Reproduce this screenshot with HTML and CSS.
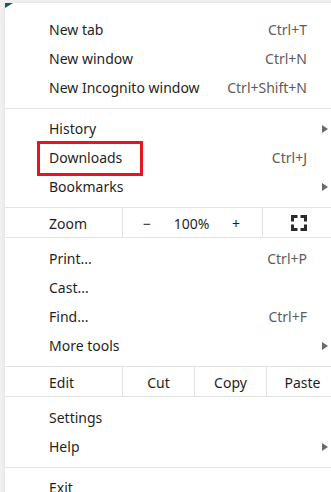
FILE: index.html
```html
<!DOCTYPE html>
<html lang="en">

<head>
  <meta charset="UTF-8">
  <meta name="viewport" content="width=device-width, initial-scale=1.0">
  <title>Browser menu</title>
  <link rel="stylesheet" href="styles.css">
</head>

<body>
  <div class="menu">
    <span class="corner"></span>

    <div class="item"><span class="label">New tab</span><span class="key">Ctrl+T</span><span class="more"></span></div>
    <div class="item"><span class="label">New window</span><span class="key">Ctrl+N</span><span class="more"></span></div>
    <div class="item"><span class="label">New Incognito window</span><span class="key">Ctrl+Shift+N</span><span class="more"></span></div>

    <hr class="sep">

    <div class="item"><span class="label">History</span><span class="key"></span><span class="more sub"></span></div>
    <div class="item">
      <span class="label">Downloads</span><span class="key">Ctrl+J</span><span class="more"></span>
      <span class="mark"></span>
    </div>
    <div class="item"><span class="label">Bookmarks</span><span class="key"></span><span class="more sub"></span></div>

    <div class="strip">
      <div class="cell first">Zoom</div>
      <div class="cell zoom">
        <span>&minus;</span>
        <span>100%</span>
        <span>+</span>
      </div>
      <div class="cell full">
        <svg width="16" height="16" viewBox="0 0 16 16">
          <path d="M1.5 6.5V1.5H6.5M9.5 1.5h5v5M14.5 9.5v5h-5M6.5 14.5h-5v-5" fill="none" stroke="#2b2b2b" stroke-width="3" />
        </svg>
      </div>
    </div>

    <div class="item"><span class="label">Print...</span><span class="key">Ctrl+P</span><span class="more"></span></div>
    <div class="item"><span class="label">Cast...</span><span class="key"></span><span class="more"></span></div>
    <div class="item"><span class="label">Find...</span><span class="key">Ctrl+F</span><span class="more"></span></div>
    <div class="item"><span class="label">More tools</span><span class="key"></span><span class="more sub"></span></div>

    <div class="strip">
      <div class="cell first">Edit</div>
      <div class="cell btn">Cut</div>
      <div class="cell btn">Copy</div>
      <div class="cell btn">Paste</div>
    </div>

    <div class="item"><span class="label">Settings</span><span class="key"></span><span class="more"></span></div>
    <div class="item"><span class="label">Help</span><span class="key"></span><span class="more sub"></span></div>

    <hr class="sep">

    <div class="item"><span class="label">Exit</span><span class="key"></span><span class="more"></span></div>
  </div>
</body>

</html>
```

FILE: styles.css
```css
/* Page and menu box */
* {
  box-sizing: border-box;
  margin: 0;
  padding: 0;
}

html,
body {
  height: 100%;
  overflow: hidden;
}

body {
  background: #f0f0f0;
  font-family: 'Noto Sans', 'Open Sans', sans-serif;
  font-size: 14px;
  color: #1f1f1f;
  -webkit-font-smoothing: antialiased;
}

.menu {
  position: relative;
  width: 334px;
  margin: 3px 0 0 5px;
  padding-top: 12px;
  background: #fff;
  box-shadow: 0 0 4px rgba(0, 0, 0, 0.08);
}

/* little dark corner at top left */
.corner {
  position: absolute;
  left: 0;
  top: 0;
  width: 0;
  height: 0;
  border-top: 5px solid #17585c;
  border-right: 8px solid transparent;
}

/* Regular rows */
.item {
  position: relative;
  display: grid;
  grid-template-columns: 1fr auto 21px;
  align-items: center;
  height: 29px;
  padding: 0 11px 0 44px;
}

.key {
  color: #5c5c5c;
}

.more.sub {
  justify-self: end;
  width: 0;
  height: 0;
  border-top: 4.5px solid transparent;
  border-bottom: 4.5px solid transparent;
  border-left: 6px solid #6a6a6a;
}

/* red highlight frame drawn over the Downloads row */
.mark {
  position: absolute;
  left: 32px;
  top: -2px;
  width: 106px;
  height: 35px;
  border: 3px solid #e8141e;
}

.sep {
  border: none;
  border-top: 1px solid #e3e3e3;
  margin: 6px 0 5px;
}

/* Zoom and Edit strips */
.strip {
  display: flex;
  height: 31px;
  margin: 6px 0;
  border-top: 1px solid #e3e3e3;
  border-bottom: 1px solid #e3e3e3;
}

.cell {
  display: flex;
  align-items: center;
  justify-content: center;
  padding-top: 2px;
  border-left: 1px solid #e3e3e3;
}

.cell.first {
  width: 117px;
  justify-content: flex-start;
  padding-left: 44px;
  border-left: none;
}

.cell.zoom {
  width: 140px;
  justify-content: space-between;
  padding: 2px 22px 0 20px;
}

.cell.full {
  flex: 1;
  padding: 0 5px 0 0;
}

.cell.btn {
  width: 72px;
}
```
